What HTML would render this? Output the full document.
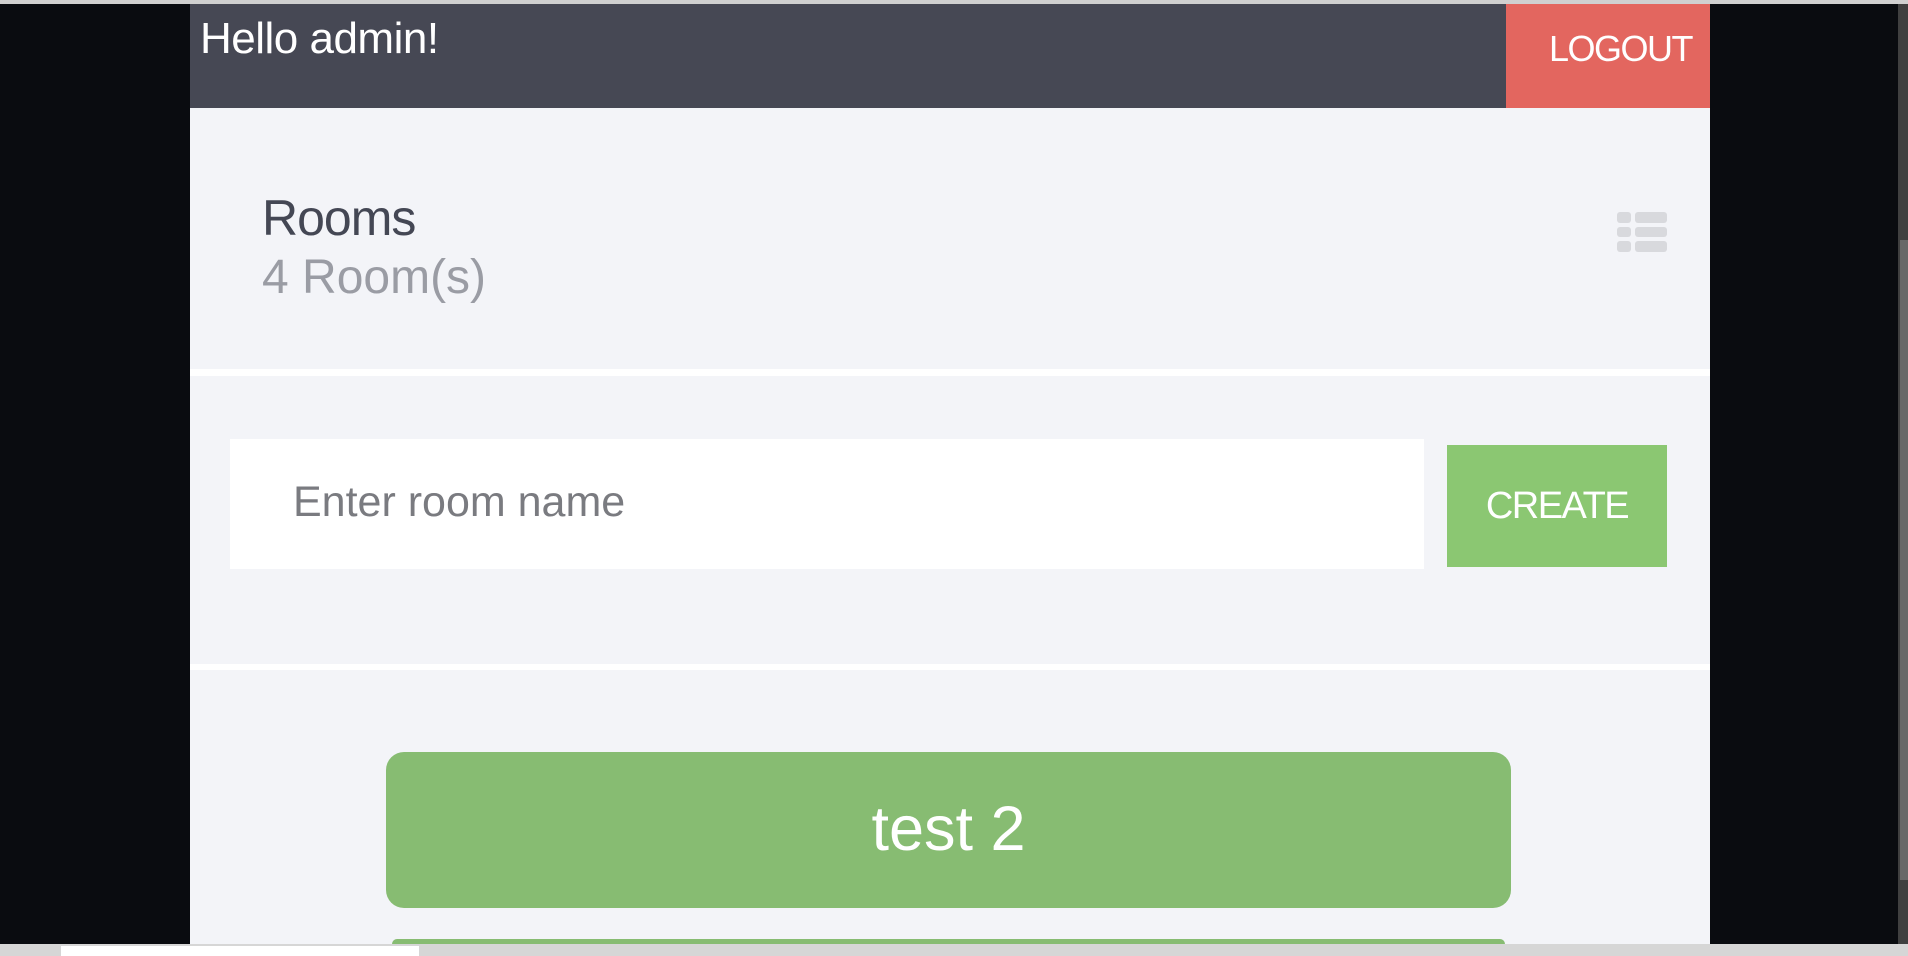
<!DOCTYPE html>
<html><head><style>
*{margin:0;padding:0;box-sizing:border-box}
html,body{width:1908px;height:956px;overflow:hidden}
body{background:#0a0c10;position:relative;font-family:"Liberation Sans",sans-serif}
.a{position:absolute}
</style></head><body>
<div class="a" style="left:0;top:0;width:1908px;height:4px;background:#d0d0d0"></div>
<div class="a" style="left:190px;top:4px;width:1520px;height:940px;background:#f3f4f8"></div>
<div class="a" style="left:190px;top:4px;width:1316px;height:104px;background:#464854"></div>
<div class="a" style="left:200px;top:14px;color:#fff;font-size:44px;line-height:50px;letter-spacing:-0.5px">Hello admin!</div>
<div class="a" style="left:1506px;top:4px;width:204px;height:104px;background:#e3665f"></div>
<div class="a" style="left:1549px;top:27px;color:#fff;font-size:36px;line-height:44px;letter-spacing:-1.5px">LOGOUT</div>
<div class="a" style="left:262px;top:190px;color:#444754;font-size:50px;line-height:56px;letter-spacing:-1px">Rooms</div>
<div class="a" style="left:262px;top:250px;color:#9a9ca4;font-size:48px;line-height:56px;letter-spacing:0px">4 Room(s)</div>
<svg class="a" style="left:1616px;top:211px" width="52" height="42" viewBox="0 0 52 42" fill="#d8d9dd">
<rect x="1" y="1" width="14" height="11" rx="3"/><rect x="19" y="1" width="32" height="11" rx="3"/>
<rect x="1" y="16" width="14" height="10" rx="3"/><rect x="19" y="16" width="32" height="10" rx="3"/>
<rect x="1" y="30" width="14" height="11" rx="3"/><rect x="19" y="30" width="32" height="11" rx="3"/></svg>
<div class="a" style="left:190px;top:369px;width:1520px;height:7px;background:#fff"></div>
<div class="a" style="left:230px;top:439px;width:1194px;height:130px;background:#fff"></div>
<div class="a" style="left:293px;top:477px;color:#7a7b80;font-size:43px;line-height:50px;letter-spacing:0px">Enter room name</div>
<div class="a" style="left:1447px;top:445px;width:220px;height:122px;background:#8bc772"></div>
<div class="a" style="left:1447px;top:481px;width:220px;text-align:center;color:#fff;font-size:38px;line-height:50px;letter-spacing:-1.5px">CREATE</div>
<div class="a" style="left:190px;top:664px;width:1520px;height:6px;background:#fff"></div>
<div class="a" style="left:386px;top:752px;width:1125px;height:156px;background:#87bc72;border-radius:18px"></div>
<div class="a" style="left:386px;top:793px;width:1125px;text-align:center;color:#fff;font-size:63px;line-height:72px">test 2</div>
<div class="a" style="left:392px;top:939px;width:1113px;height:5px;background:#87bc72;border-radius:18px 18px 0 0"></div>
<div class="a" style="left:1898px;top:4px;width:10px;height:940px;background:#404040"></div>
<div class="a" style="left:1900px;top:240px;width:8px;height:640px;background:#686868"></div>
<div class="a" style="left:0;top:944px;width:1908px;height:12px;background:#d6d6d6"></div>
<div class="a" style="left:61px;top:946px;width:358px;height:10px;background:#fff"></div>
</body></html>
